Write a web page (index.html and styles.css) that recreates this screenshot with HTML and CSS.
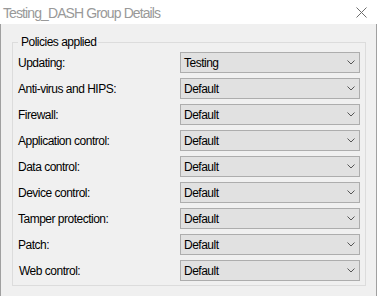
FILE: index.html
```html
<!DOCTYPE html>
<html>
<head lang="en">
    <meta charset="UTF-8">
    <title>Testing_DASH Group Details</title>
    <link rel="stylesheet" href="styles.css">
</head>
<body>
<div class="window">
    <div class="titlebar">
        <span class="title">Testing_DASH Group Details</span>
        <svg class="close" width="11" height="11" viewBox="0 0 11 11">
            <path d="M0.5 0.5 L10.5 10.5 M10.5 0.5 L0.5 10.5" stroke="#6d6d6d" stroke-width="1" fill="none"/>
        </svg>
    </div>
    <div class="dialog-body">
        <div class="group">
            <span class="legend">Policies applied</span>
            <div class="policy-list">
                <label>Updating:</label>
                <div class="combo"><span>Testing</span><svg class="arrow" width="8" height="5" viewBox="0 0 8 5"><path d="M0.5 0.5 L4 4 L7.5 0.5" stroke="#555" fill="none"/></svg></div>
                <label>Anti-virus and HIPS:</label>
                <div class="combo"><span>Default</span><svg class="arrow" width="8" height="5" viewBox="0 0 8 5"><path d="M0.5 0.5 L4 4 L7.5 0.5" stroke="#555" fill="none"/></svg></div>
                <label>Firewall:</label>
                <div class="combo"><span>Default</span><svg class="arrow" width="8" height="5" viewBox="0 0 8 5"><path d="M0.5 0.5 L4 4 L7.5 0.5" stroke="#555" fill="none"/></svg></div>
                <label>Application control:</label>
                <div class="combo"><span>Default</span><svg class="arrow" width="8" height="5" viewBox="0 0 8 5"><path d="M0.5 0.5 L4 4 L7.5 0.5" stroke="#555" fill="none"/></svg></div>
                <label>Data control:</label>
                <div class="combo"><span>Default</span><svg class="arrow" width="8" height="5" viewBox="0 0 8 5"><path d="M0.5 0.5 L4 4 L7.5 0.5" stroke="#555" fill="none"/></svg></div>
                <label>Device control:</label>
                <div class="combo"><span>Default</span><svg class="arrow" width="8" height="5" viewBox="0 0 8 5"><path d="M0.5 0.5 L4 4 L7.5 0.5" stroke="#555" fill="none"/></svg></div>
                <label>Tamper protection:</label>
                <div class="combo"><span>Default</span><svg class="arrow" width="8" height="5" viewBox="0 0 8 5"><path d="M0.5 0.5 L4 4 L7.5 0.5" stroke="#555" fill="none"/></svg></div>
                <label>Patch:</label>
                <div class="combo"><span>Default</span><svg class="arrow" width="8" height="5" viewBox="0 0 8 5"><path d="M0.5 0.5 L4 4 L7.5 0.5" stroke="#555" fill="none"/></svg></div>
                <label class="shifted">Web control:</label>
                <div class="combo"><span>Default</span><svg class="arrow" width="8" height="5" viewBox="0 0 8 5"><path d="M0.5 0.5 L4 4 L7.5 0.5" stroke="#555" fill="none"/></svg></div>
            </div>
        </div>
    </div>
</div>
</body>
</html>
```

FILE: styles.css
```css
body {
    margin: 0;
    background: #ffffff;
    font-family: "Liberation Sans", Arial, sans-serif;
    font-size: 12px;
    letter-spacing: -0.5px;
    color: #000000;
}

.window {
    width: 377px;
    height: 296px;
    display: flex;
    flex-direction: column;
}

/* title bar */
.titlebar {
    height: 24px;
    flex: none;
    background: #ffffff;
    display: flex;
    align-items: center;
    justify-content: space-between;
    padding: 0 10px 0 3px;
}
.title {
    font-size: 14px;
    color: #999999;
    letter-spacing: -0.9px;
    padding-top: 1px;
}
.close {
    display: block;
    margin-top: 1px;
}

/* dialog body */
.dialog-body {
    flex: 1;
    background: #f0f0f0;
    border-left: 1px solid #a0a0a0;
    border-right: 1px solid #a0a0a0;
    padding: 18px 0 0 11px;
}

.group {
    box-sizing: border-box;
    width: 354px;
    height: 244px;
    border: 1px solid #dcdcdc;
    padding: 0 0 0 5px;
    display: flex;
    flex-direction: column;
}
.legend {
    align-self: flex-start;
    margin-top: -9px;
    padding: 0 2px 0 3px;
    line-height: 16px;
    background: #f0f0f0;
}

.policy-list {
    margin-top: 2px;
    display: grid;
    grid-template-columns: 162px 180px;
    grid-auto-rows: 21px;
    row-gap: 5px;
    align-items: center;
}
.policy-list label.shifted {
    padding-left: 1px;
}

.combo {
    box-sizing: border-box;
    height: 21px;
    border: 1px solid #adadad;
    background: #e1e1e1;
    display: flex;
    align-items: center;
    justify-content: space-between;
    padding: 0 4px 0 3px;
}
.arrow {
    display: block;
}
```
